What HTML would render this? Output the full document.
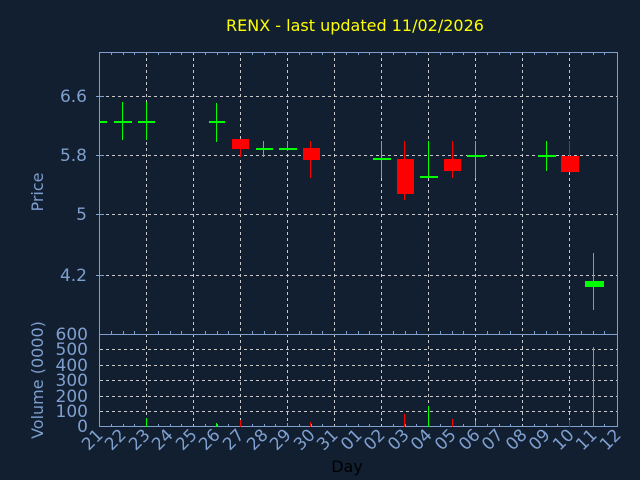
<!DOCTYPE html>
<html><head><meta charset="utf-8"><style>
html,body{margin:0;padding:0;background:#111f30;}
svg{display:block;font-family:"DejaVu Sans","Liberation Sans",sans-serif;}
</style></head><body>
<svg width="640" height="480" xmlns="http://www.w3.org/2000/svg">
<rect width="640" height="480" fill="#111f30"/>
<text x="355" y="31" fill="#ffff00" font-size="16" text-anchor="middle">RENX - last updated 11/02/2026</text>
<g stroke="#c8c8c8" stroke-dasharray="3,3" stroke-width="1">
<line x1="100" y1="96.5" x2="617" y2="96.5"/><line x1="100" y1="155.5" x2="617" y2="155.5"/><line x1="100" y1="214.5" x2="617" y2="214.5"/><line x1="100" y1="275.5" x2="617" y2="275.5"/>
<line x1="100" y1="349.5" x2="617" y2="349.5"/><line x1="100" y1="365.5" x2="617" y2="365.5"/><line x1="100" y1="380.5" x2="617" y2="380.5"/><line x1="100" y1="396.5" x2="617" y2="396.5"/><line x1="100" y1="411.5" x2="617" y2="411.5"/>
<line x1="146.5" y1="52" x2="146.5" y2="427"/><line x1="193.5" y1="52" x2="193.5" y2="427"/><line x1="240.5" y1="52" x2="240.5" y2="427"/><line x1="287.5" y1="52" x2="287.5" y2="427"/><line x1="334.5" y1="52" x2="334.5" y2="427"/><line x1="381.5" y1="52" x2="381.5" y2="427"/><line x1="428.5" y1="52" x2="428.5" y2="427"/><line x1="475.5" y1="52" x2="475.5" y2="427"/><line x1="522.5" y1="52" x2="522.5" y2="427"/><line x1="569.5" y1="52" x2="569.5" y2="427"/>
</g>
<g stroke="#7f9fcf" fill="none" stroke-width="1">
<rect x="99.5" y="52.5" width="518" height="374"/>
<line x1="99.5" y1="334.5" x2="617.5" y2="334.5"/>
<line x1="96" y1="96.5" x2="104" y2="96.5"/><line x1="96" y1="155.5" x2="104" y2="155.5"/><line x1="96" y1="214.5" x2="104" y2="214.5"/><line x1="96" y1="275.5" x2="104" y2="275.5"/>
<path d="M111.5 52v3M123.5 52v3M134.5 52v3M158.5 52v3M170.5 52v3M181.5 52v3M205.5 52v3M217.5 52v3M228.5 52v3M252.5 52v3M264.5 52v3M275.5 52v3M299.5 52v3M311.5 52v3M322.5 52v3M346.5 52v3M358.5 52v3M369.5 52v3M393.5 52v3M405.5 52v3M416.5 52v3M440.5 52v3M452.5 52v3M463.5 52v3M487.5 52v3M499.5 52v3M510.5 52v3M534.5 52v3M546.5 52v3M557.5 52v3M581.5 52v3M593.5 52v3M604.5 52v3"/>
<path d="M111.5 331v3M123.5 331v3M134.5 331v3M158.5 331v3M170.5 331v3M181.5 331v3M205.5 331v3M217.5 331v3M228.5 331v3M252.5 331v3M264.5 331v3M275.5 331v3M299.5 331v3M311.5 331v3M322.5 331v3M346.5 331v3M358.5 331v3M369.5 331v3M393.5 331v3M405.5 331v3M416.5 331v3M440.5 331v3M452.5 331v3M463.5 331v3M487.5 331v3M499.5 331v3M510.5 331v3M534.5 331v3M546.5 331v3M557.5 331v3M581.5 331v3M593.5 331v3M604.5 331v3"/>
<path d="M111.5 424v3M123.5 424v3M134.5 424v3M158.5 424v3M170.5 424v3M181.5 424v3M205.5 424v3M217.5 424v3M228.5 424v3M252.5 424v3M264.5 424v3M275.5 424v3M299.5 424v3M311.5 424v3M322.5 424v3M346.5 424v3M358.5 424v3M369.5 424v3M393.5 424v3M405.5 424v3M416.5 424v3M440.5 424v3M452.5 424v3M463.5 424v3M487.5 424v3M499.5 424v3M510.5 424v3M534.5 424v3M546.5 424v3M557.5 424v3M581.5 424v3M593.5 424v3M604.5 424v3"/>
</g>
<g fill="#7f9fcf" font-size="17" text-anchor="end">
<text x="87" y="102">6.6</text><text x="87" y="161">5.8</text><text x="87" y="220">5</text><text x="87" y="281">4.2</text>
<text x="88" y="340">600</text><text x="88" y="355">500</text><text x="88" y="371">400</text><text x="88" y="386">300</text><text x="88" y="402">200</text><text x="88" y="417">100</text><text x="88" y="432">0</text>
</g>
<text transform="translate(43,192) rotate(-90)" fill="#7f9fcf" font-size="16" text-anchor="middle">Price</text>
<text transform="translate(43,380) rotate(-90)" fill="#7f9fcf" font-size="16" text-anchor="middle">Volume (0000)</text>
<text x="347" y="472" fill="#000" font-size="16" text-anchor="middle">Day</text>
<g fill="#7f9fcf" font-size="17" text-anchor="end">
<text transform="translate(104,436) rotate(-45)">21</text>
<text transform="translate(127,436) rotate(-45)">22</text>
<text transform="translate(151,436) rotate(-45)">23</text>
<text transform="translate(174,436) rotate(-45)">24</text>
<text transform="translate(198,436) rotate(-45)">25</text>
<text transform="translate(221,436) rotate(-45)">26</text>
<text transform="translate(245,436) rotate(-45)">27</text>
<text transform="translate(269,436) rotate(-45)">28</text>
<text transform="translate(292,436) rotate(-45)">29</text>
<text transform="translate(316,436) rotate(-45)">30</text>
<text transform="translate(339,436) rotate(-45)">31</text>
<text transform="translate(363,436) rotate(-45)">01</text>
<text transform="translate(386,436) rotate(-45)">02</text>
<text transform="translate(410,436) rotate(-45)">03</text>
<text transform="translate(433,436) rotate(-45)">04</text>
<text transform="translate(457,436) rotate(-45)">05</text>
<text transform="translate(481,436) rotate(-45)">06</text>
<text transform="translate(504,436) rotate(-45)">07</text>
<text transform="translate(528,436) rotate(-45)">08</text>
<text transform="translate(551,436) rotate(-45)">09</text>
<text transform="translate(575,436) rotate(-45)">10</text>
<text transform="translate(598,436) rotate(-45)">11</text>
<text transform="translate(622,436) rotate(-45)">12</text>
</g>
<g stroke="#00ff00" stroke-width="1">
<line x1="122.5" y1="102" x2="122.5" y2="140"/><line x1="146.5" y1="102" x2="146.5" y2="140"/><line x1="216.5" y1="103" x2="216.5" y2="142"/>
<line x1="263.5" y1="141" x2="263.5" y2="157"/><line x1="287.5" y1="141" x2="287.5" y2="151"/>
<line x1="381.5" y1="141" x2="381.5" y2="178"/><line x1="428.5" y1="141" x2="428.5" y2="178"/><line x1="475.5" y1="141" x2="475.5" y2="178"/><line x1="546.5" y1="141" x2="546.5" y2="171"/>
<line x1="593.5" y1="253" x2="593.5" y2="310"/>
</g>
<g fill="#00ff00">
<rect x="99" y="121" width="8" height="2"/><rect x="114" y="121" width="18" height="2"/><rect x="138" y="121" width="17" height="2"/><rect x="209" y="121" width="16" height="2"/>
<rect x="256" y="148" width="17" height="2"/><rect x="279" y="148" width="18" height="2"/>
<rect x="373" y="158" width="18" height="2"/><rect x="420" y="176" width="18" height="2"/><rect x="467" y="155" width="18" height="2"/><rect x="538" y="155" width="18" height="2"/>
<rect x="585" y="281" width="19" height="6"/>
</g>
<g stroke="#ff0000" stroke-width="1">
<line x1="240.5" y1="139" x2="240.5" y2="157"/><line x1="310.5" y1="141" x2="310.5" y2="178"/><line x1="404.5" y1="141" x2="404.5" y2="200"/><line x1="452.5" y1="141" x2="452.5" y2="178"/><line x1="569.5" y1="141" x2="569.5" y2="171"/>
</g>
<g fill="#ff0000">
<rect x="232" y="139" width="17" height="10"/><rect x="303" y="148" width="17" height="12"/><rect x="397" y="159" width="17" height="35"/><rect x="444" y="159" width="17" height="12"/><rect x="561" y="156" width="18" height="16"/>
</g>
<g fill="#00ff00"><rect x="146" y="418" width="1" height="9"/><rect x="428" y="406" width="1" height="21"/><rect x="593" y="347" width="1" height="80"/><rect x="475" y="421" width="1" height="6"/><rect x="216" y="423" width="1" height="4"/><rect x="287" y="423" width="1" height="4"/></g>
<g fill="#ff0000"><rect x="404" y="414" width="1" height="13"/><rect x="452" y="419" width="1" height="8"/><rect x="569" y="420" width="1" height="7"/><rect x="240" y="420" width="1" height="7"/><rect x="310" y="422" width="1" height="5"/></g>
</svg>
</body></html>
